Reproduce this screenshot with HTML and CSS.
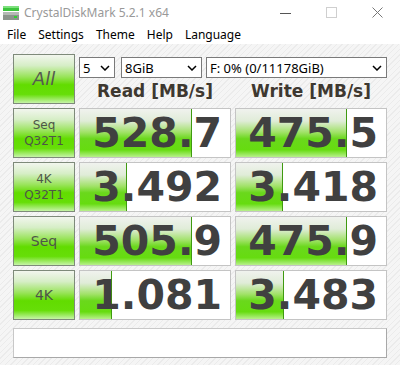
FILE: index.html
```html
<!DOCTYPE html>
<html lang="en">
  <head>
    <meta charset="UTF-8" />
    <title>CrystalDiskMark 5.2.1 x64</title>
    <link rel="stylesheet" href="styles.css">
  </head>
  <body>
    <div class="window">
      <header class="titlebar">
        <svg class="appIcon" width="16" height="16" viewBox="0 0 16 16">
          <rect x="0" y="1" width="16" height="5" fill="#3cc43c" />
          <rect x="0" y="1" width="16" height="2" fill="#7ee07e" />
          <rect x="0" y="7" width="16" height="8" fill="#8c948c" />
          <rect x="0" y="7" width="16" height="3" fill="#b4bab4" />
          <rect x="11" y="11" width="3" height="2" fill="#30d030" />
        </svg>
        <span class="title">CrystalDiskMark 5.2.1 x64</span>
        <div class="windowButtons">
          <svg width="12" height="12" viewBox="0 0 12 12"><path d="M0 6.5h11" stroke="#555" stroke-width="1" /></svg>
          <svg width="12" height="12" viewBox="0 0 12 12"><rect x="0.5" y="0.5" width="10" height="10" fill="none" stroke="#cfcfcf" /></svg>
          <svg width="12" height="12" viewBox="0 0 12 12"><path d="M0.5 0.5l10 10M10.5 0.5l-10 10" stroke="#777" stroke-width="1" /></svg>
        </div>
      </header>
      <nav class="menubar">
        <span>File</span>
        <span>Settings</span>
        <span>Theme</span>
        <span>Help</span>
        <span>Language</span>
      </nav>
      <main class="panel">
        <div class="board">
          <div class="runButton all">All</div>
          <div class="options">
            <div class="selects">
              <div class="select count">5<svg class="chevron" viewBox="0 0 10 6"><path d="M1 1l4 4 4-4" /></svg></div>
              <div class="select size">8GiB<svg class="chevron" viewBox="0 0 10 6"><path d="M1 1l4 4 4-4" /></svg></div>
              <div class="select drive">F: 0% (0/11178GiB)<svg class="chevron" viewBox="0 0 10 6"><path d="M1 1l4 4 4-4" /></svg></div>
            </div>
            <div class="headers">
              <span>Read [MB/s]</span>
              <span>Write [MB/s]</span>
            </div>
          </div>

          <div class="runButton"><span>Seq<br>Q32T1</span></div>
          <div class="score"><div class="fill" style="width: 111px"></div><span>528.7</span></div>
          <div class="score"><div class="fill" style="width: 110px"></div><span>475.5</span></div>

          <div class="runButton"><span>4K<br>Q32T1</span></div>
          <div class="score"><div class="fill" style="width: 46px"></div><span>3.492</span></div>
          <div class="score"><div class="fill" style="width: 46px"></div><span>3.418</span></div>

          <div class="runButton single"><span>Seq</span></div>
          <div class="score"><div class="fill" style="width: 111px"></div><span>505.9</span></div>
          <div class="score"><div class="fill" style="width: 110px"></div><span>475.9</span></div>

          <div class="runButton single"><span>4K</span></div>
          <div class="score"><div class="fill" style="width: 31px"></div><span>1.081</span></div>
          <div class="score"><div class="fill" style="width: 47px"></div><span>3.483</span></div>
        </div>
        <div class="status"></div>
      </main>
    </div>
  </body>
</html>
```

FILE: styles.css
```css
body {
  margin: 0;
  font-family: 'Noto Sans', 'Liberation Sans', sans-serif;
  background: #ffffff;
}
.window {
  width: 400px;
  height: 365px;
  display: flex;
  flex-direction: column;
}
.titlebar {
  height: 25px;
  display: flex;
  align-items: center;
  padding-left: 3px;
  background: #ffffff;
}
.appIcon {
  flex: 0 0 auto;
}
.title {
  margin-left: 5px;
  font-size: 12px;
  color: #999999;
}
.windowButtons {
  margin-left: auto;
  display: flex;
  align-items: center;
  gap: 34px;
  padding-right: 16px;
}
.menubar {
  height: 18px;
  display: flex;
  align-items: center;
  gap: 12px;
  padding-left: 7px;
  padding-bottom: 1px;
  font-size: 12px;
  color: #000000;
  background: #ffffff;
}
.panel {
  flex: 1 1 auto;
  padding: 10px 0 0 13px;
  background-color: #f3f3f3;
  background-image: repeating-linear-gradient(
    -45deg,
    #f5f5f5 0 3px,
    #ebebeb 3px 4px
  );
}
.board {
  display: grid;
  grid-template-columns: 62px 152px 152px;
  grid-auto-rows: 50px;
  column-gap: 4px;
  row-gap: 4px;
}
.runButton {
  box-sizing: border-box;
  border: 1px solid #7e8a7a;
  display: flex;
  align-items: center;
  justify-content: center;
  text-align: center;
  font-family: 'DejaVu Sans', Verdana, sans-serif;
  font-size: 12px;
  line-height: 16px;
  color: #4e5648;
  background: linear-gradient(
    to bottom,
    #f2f6ee 0%,
    #d6eec6 22%,
    #9ae45c 45%,
    #62dc00 62%,
    #66de08 82%,
    #c6f4a8 100%
  );
}
.runButton.single {
  font-size: 14px;
}
.runButton.all {
  font-size: 18px;
  font-style: italic;
  color: #555a50;
}
.options {
  grid-column: 2 / 4;
  display: flex;
  flex-direction: column;
}
.selects {
  margin-top: 3px;
  display: flex;
  gap: 6px;
}
.select {
  box-sizing: border-box;
  height: 21px;
  border: 1px solid #7a7a7a;
  background: #ffffff;
  display: flex;
  align-items: center;
  padding-left: 3px;
  font-size: 13px;
  color: #000000;
}
.select.count {
  width: 36px;
}
.select.size {
  width: 81px;
}
.select.drive {
  width: 181px;
  margin-left: -2px;
}
.chevron {
  width: 10px;
  height: 6px;
  margin-left: auto;
  margin-right: 4px;
  fill: none;
  stroke: #000000;
  stroke-width: 1.5;
}
.headers {
  flex: 1 1 auto;
  display: grid;
  grid-template-columns: 152px 152px;
  column-gap: 4px;
  align-items: center;
  text-align: center;
  font-family: 'DejaVu Sans', Verdana, sans-serif;
  font-weight: bold;
  font-size: 17px;
  color: #3e3830;
}
.score {
  position: relative;
  box-sizing: border-box;
  border: 1px solid #c4c4c4;
  background: #ffffff;
  display: flex;
  align-items: center;
  justify-content: flex-end;
  padding-right: 8px;
  overflow: hidden;
}
.fill {
  position: absolute;
  left: 0;
  top: 0;
  bottom: 0;
  border-right: 1px solid #3f9a10;
  background: linear-gradient(
    to bottom,
    #f0f2ee 0%,
    #e0ecd8 25%,
    #a2e26a 48%,
    #6ad81c 62%,
    #66dc10 85%,
    #b8f08c 100%
  );
}
.score span {
  position: relative;
  font-family: 'DejaVu Sans', Verdana, sans-serif;
  font-weight: bold;
  font-size: 41px;
  line-height: 1;
  color: #404040;
}
.status {
  margin-top: 8px;
  box-sizing: border-box;
  width: 374px;
  height: 30px;
  border: 1px solid #a8a8a8;
  border-top-color: #c8c8c8;
  border-left-color: #c8c8c8;
  background: #ffffff;
}
```
